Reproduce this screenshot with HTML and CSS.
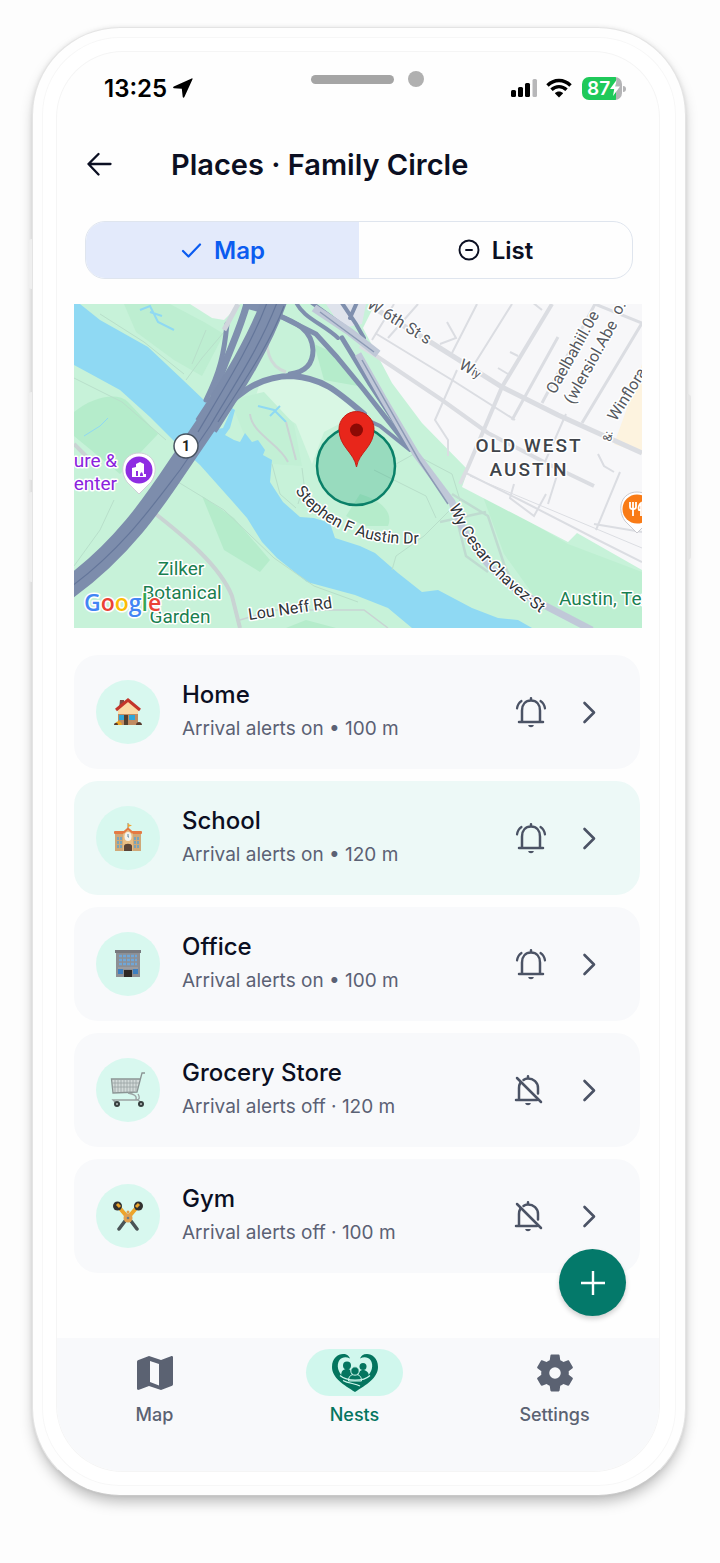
FILE: index.html
```html
<!DOCTYPE html>
<html lang="en">
<head>
    <meta charset="UTF-8">
    <meta name="viewport" content="width=device-width, initial-scale=1">
    <title>Places · Family Circle</title>
    <link rel="stylesheet" href="styles.css">
</head>
<body>
    <!-- shared icons -->
    <svg class="defs" width="0" height="0" aria-hidden="true">
        <symbol id="bell" viewBox="0 0 36 36">
            <g fill="none" stroke="currentColor" stroke-width="2.500" stroke-linecap="round" stroke-linejoin="round">
                <path d="M6 28H30M9 28V16.500C9 10.500 12.500 6.500 18 6.500S27 10.500 27 16.500V28M18 4.200V6"/>
                <path d="M8.500 7C6 8.700 4.500 11 4 14.500M27.500 7C30 8.700 31.500 11 32 14.500" stroke-width="2.200"/>
            </g>
            <path fill="currentColor" d="M15.200 31H20.800C20.500 34 15.500 34 15.200 31Z"/>
        </symbol>
        <symbol id="bell-off" viewBox="0 0 36 36">
            <g fill="none" stroke="currentColor" stroke-width="2.500" stroke-linecap="round" stroke-linejoin="round">
                <path d="M3 28H24M6 28V16C6 14 6.500 12.200 7.500 10.500M10.500 8C11.700 7 13.200 6.500 15 6.500C20.500 6.500 25 10.500 25 16V21.500M15 4.200V6"/>
                <path d="M4 6L28 30"/>
            </g>
            <path fill="currentColor" d="M12.200 31H17.800C17.500 34 12.500 34 12.200 31Z"/>
        </symbol>
        <symbol id="chevron" viewBox="0 0 24 24">
            <path d="M7.500 3L17 12.500L7.500 22" fill="none" stroke="currentColor" stroke-width="2.600" stroke-linecap="round" stroke-linejoin="round"/>
        </symbol>
    </svg>

    <div class="phone">
        <span class="key key_mute"></span>
        <span class="key key_up"></span>
        <span class="key key_down"></span>
        <span class="key key_power"></span>

        <div class="screen">
            <div class="status">
                <div class="clock">
                    <span>13:25</span>
                    <svg width="20" height="20" viewBox="0 0 20 20"><path d="M19.500 1.200C19.800.5 19.300.1 18.700.4L.8 8.500C-.2 9-.1 10.100 1 10.200L8.800 10.700L9.700 18.800C9.900 20 10.900 20 11.400 19Z"/></svg>
                </div>
                <div class="sensor">
                    <span class="speaker"></span>
                    <span class="camera"></span>
                </div>
                <div class="signals">
                    <svg width="27" height="20" viewBox="0 0 27 20">
                        <rect x="0" y="12" width="5" height="7" rx="1.500"/>
                        <rect x="7" y="9" width="5" height="10" rx="1.500"/>
                        <rect x="14" y="5" width="5" height="14" rx="1.500"/>
                        <rect x="21.500" y="1" width="4.500" height="18" rx="1.500" fill="#b7b7b9"/>
                    </svg>
                    <svg width="26" height="20" viewBox="0 0 26 20">
                        <g fill="none" stroke="#000" stroke-width="3.400">
                            <path d="M1.500 7.500C8 .8 18 .8 24.500 7.500"/>
                            <path d="M5.500 11.800C9.800 7.600 16.200 7.600 20.500 11.800"/>
                        </g>
                        <path d="M13 19.500L8.800 15.300C11 13 15 13 17.200 15.300Z"/>
                    </svg>
                    <div class="battery"><span>87</span><svg width="10" height="16" viewBox="0 0 10 16"><path d="M6.500 0L0 9H4.200L3 16L10 6.500H5.500Z" fill="#fff"/></svg></div>
                </div>
            </div>

            <header class="top">
                <a class="back" href="#" aria-label="Back">
                    <svg width="26" height="26" viewBox="0 0 26 26"><path d="M23.500 12H1.500M11.500 2L1.500 12L11.500 22.500" fill="none" stroke="currentColor" stroke-width="2.300" stroke-linecap="round" stroke-linejoin="round"/></svg>
                </a>
                <h1>Places · Family Circle</h1>
            </header>

            <div class="switch">
                <button type="button" class="on" aria-pressed="true">
                    <svg width="22" height="22" viewBox="0 0 22 22"><path d="M3 12L8.500 17.500L20 5.500" fill="none" stroke="currentColor" stroke-width="2.200" stroke-linecap="round" stroke-linejoin="round"/></svg>
                    Map
                </button>
                <button type="button" aria-pressed="false">
                    <svg width="22" height="22" viewBox="0 0 22 22"><g fill="none" stroke="currentColor" stroke-width="1.900" stroke-linecap="round"><circle cx="11" cy="11" r="9.500"/><path d="M8 11H14"/></g></svg>
                    List
                </button>
            </div>

            <svg class="map" viewBox="0 0 568 324" role="img" aria-label="Map of Old West Austin">
                <defs>
                    <path id="l_sixth" d="M292 3L376 55"/>
                    <path id="l_stephen" d="M221 187C244 219 288 247 366 238"/>
                    <path id="l_chavez" d="M375 203C392 244 420 276 474 315"/>
                    <path id="l_neff" d="M175 316L280 301"/>
                </defs>
                <rect width="568" height="324" fill="#c7f2d9"/>

                <!-- parks -->
                <g fill="#b5eccb">
                    <path d="M0 108C20 92 44 88 54 98L84 130L46 170L0 132Z"/>
                    <path d="M128 192L160 214L196 256L186 268L150 246Z"/>
                    <path d="M96 0L130 18L150 30L128 72L100 56L62 28L50 0Z" fill="#bdeed1"/>
                    <path d="M240 40L262 50L284 82L250 76Z"/>
                    <path d="M286 190C306 196 320 208 314 222L290 222L272 212Z"/>
                    <path d="M408 190L494 240L568 268V324H520L460 292L430 250Z" fill="#bdefd1"/>
                    <path d="M212 324L232 316L262 324Z"/>
                </g>
                <path d="M186 78L224 72L262 88L284 110L250 128L238 160L222 120L182 92Z" fill="#d9f7e4"/>
                <path d="M156 96L190 88L220 120L228 162L198 160L170 130Z" fill="#c2f0d5"/>

                <!-- town blocks -->
                <path d="M301 0L289 24L318 79L348 119L394 166L388 183L494 238L503 229L568 266V0Z" fill="#f7f7f9"/>
                <path d="M116 0L138 14L150 16L166 0Z" fill="#f4f4f6"/>
                <path d="M252 0H292L288 20L268 24Z" fill="#dfe3ec"/>
                <path d="M568 60L556 96L540 140L568 150Z" fill="#fdf3df"/>

                <!-- river -->
                <path fill="#8fd9f3" d="M0 0H6L26 16L74 43L109 76L132 98L139 126L149 124L158 104L161 106L156 124L151 131L160 136L166 138L171 129L178 138L184 136L191 146L189 151L198 156L196 178L209 198L226 213L240 214L256 219L261 234L286 242L301 249L324 269L348 288L364 286L398 304L424 314L444 316L458 324H338L314 304L281 291L233 278L203 254L188 238L173 214L159 198L126 161L99 136L76 113L46 86L13 68L0 61Z"/>
                <g fill="none" stroke="#8fd9f3" stroke-width="2">
                    <path d="M66 6L76 2L84 18L100 26M76 8L88 12"/>
                    <path d="M184 102L200 106L212 118M196 112L206 102"/>
                    <path d="M10 132L26 122L34 114" stroke-width="1"/>
                </g>

                <!-- paths in the parks -->
                <g fill="none" stroke="#b8dfca" stroke-width="1">
                    <path d="M0 74L48 98L92 136M26 10L70 38L110 70"/>
                    <path d="M104 178L150 206L200 254L240 282L284 298"/>
                    <path d="M150 28L128 54L112 76M132 26L118 60"/>
                    <path d="M198 160L206 190L222 204M228 164L230 180L224 200"/>
                    <path d="M318 266L322 252L350 232L386 196L378 170L340 150L322 160"/>
                    <path d="M300 166L352 192L362 214"/>
                    <path d="M0 262L26 226L40 196"/>
                </g>
                <g fill="none" stroke="#c9d3d3" stroke-width="4">
                    <path d="M79 208C110 232 146 262 158 292L166 324"/>
                    <path d="M0 140L16 156" />
                    <path d="M166 316L200 306L290 306L314 324" stroke-width="1.500"/>
                    <path d="M176 110C178 130 206 140 214 158M212 118L222 156" stroke-width="2"/>
                    <path d="M378 190L414 212L430 260L440 282M384 220L392 252L414 268M366 218L412 208" stroke-width="2.500" stroke="#bfdbd0"/>
                </g>

                <!-- streets -->
                <g fill="none" stroke="#dbdde2">
                    <path d="M300 4L358 39L428 83L484 111L568 149" stroke-width="5"/>
                    <path d="M286 42L304 53L368 96L414 129L470 158L520 182" stroke-width="4"/>
                    <path d="M478 0L428 83L394 163L386 180" stroke-width="4"/>
                    <path d="M301 29L378 76L441 116M344 0L314 34M320 0L298 36" stroke-width="2"/>
                    <path d="M403 0L378 49M438 0L401 59M373 18L382 34L366 40" stroke-width="2"/>
                    <path d="M521 0L468 99M568 19L508 119M484 33L438 116M521 0L568 19" stroke-width="3"/>
                    <path d="M383 66L361 116L374 136V152M492 110L470 160" stroke-width="2"/>
                    <path d="M436 48L444 52M424 64L434 70M458 -2L468 6M524 150L530 162L540 168" stroke-width="2"/>
                    <path d="M390 168L450 198L520 234L568 258M484 168L474 200M546 168L522 226M440 180L436 194L460 212L472 190M520 220L568 228" stroke-width="2"/>
                    <path d="M396 172L568 244" stroke-width="1"/>
                </g>

                <!-- highway and ramps -->
                <g fill="none" stroke="#7f8fae" stroke-linecap="round">
                    <path d="M174 -4C166 28 152 52 140 90" stroke-width="7"/>
                    <path d="M153 20C150 50 146 68 132 96" stroke-width="5"/>
                    <path d="M174 0L196 6" stroke-width="10"/>
                    <path d="M203 11C222 18 238 26 239 46C239 60 232 68 216 70" stroke-width="5"/>
                    <path d="M134 126C160 88 186 72 218 72C248 74 262 86 290 110" stroke-width="6"/>
                    <path d="M206 12L242 30L262 52L290 86L334 142" stroke-width="5"/>
                    <path d="M221 -4C228 14 250 20 264 34M234 -4L286 34L300 46" stroke-width="4"/>
                    <path d="M266 -4L282 20L290 34M284 -4L276 14" stroke-width="4"/>
                    <path d="M268 34L296 80L342 150" stroke-width="5"/>
                    <path d="M280 110L306 122L336 146" stroke-width="4"/>
                </g>
                <g fill="none" stroke="#c0c8d8">
                    <path d="M240 4L276 28L304 50" stroke-width="8"/>
                    <path d="M284 50L310 96L342 150L378 198C392 244 430 282 462 297L518 326" stroke-width="7"/>
                    <path d="M196 20C190 44 194 62 212 68" stroke-width="3" stroke="#cfdad8"/>
                    <path d="M150 26L164 0" stroke-width="5" stroke="#d0d5dc"/>
                </g>
                <g fill="none" stroke="#8c9ab5" stroke-width="1.500">
                    <path d="M288 56L346 158L374 200M246 8L300 48"/>
                </g>
                <path d="M202 -8C186 40 154 88 132 122" fill="none" stroke="#7d8dac" stroke-width="25"/>
                <path d="M138 112L104 162C80 198 48 246 -8 286" fill="none" stroke="#7d8dac" stroke-width="21"/>
                <g fill="none" stroke="#64769a" stroke-width="1.200">
                    <path d="M204 -4C186 44 158 84 136 122L106 166C80 200 48 246 -6 285"/>
                    <path d="M194 -4C178 40 150 84 124 128M210 2C194 44 168 80 144 118"/>
                </g>

                <!-- place circle and pin -->
                <circle cx="282" cy="162" r="39" fill="#0a9670" fill-opacity=".25" stroke="#0a8068" stroke-width="2.500"/>
                <path d="M282.500 163C280 148 265 143 265 125A17.500 17.500 0 0 1 300 125C300 143 285 148 282.500 163Z" fill="#e8261b" stroke="#c41f16" stroke-width="1"/>
                <circle cx="282.500" cy="126" r="6.500" fill="#8c0a05"/>

                <!-- road shield -->
                <circle cx="112" cy="142" r="12" fill="#fff" stroke="#47525f" stroke-width="1.500"/>
                <text x="112" y="147" text-anchor="middle" class="shield">1</text>

                <!-- museum pin -->
                <path d="M65 190L53 178C44 165 50 149 65 149S86 165 77 178Z" fill="#fff" stroke="#cfcfd6" stroke-width="1"/>
                <circle cx="65" cy="166" r="13.500" fill="#8e2de2"/>
                <path d="M58 172V164L62 163V160L66 158L70 160V170H72V173H58ZM62 172V167H64V172ZM66 172C66 167 69 167 69 172Z" fill="#fff" fill-rule="evenodd"/>

                <!-- restaurant pin -->
                <path d="M563 229L551 217C542 204 548 188 563 188S584 204 575 217Z" fill="#fff" stroke="#c9c9cf" stroke-width="1"/>
                <circle cx="563" cy="205" r="14.500" fill="#f97b16"/>
                <path d="M556 198V203C556 206 562 206 562 203V198M559 198V212M567 212V199C565 200 564 204 565 206H567" fill="none" stroke="#fff" stroke-width="1.800"/>

                <!-- labels -->
                <g class="street">
                    <text><textPath href="#l_sixth">W 6th St s</textPath></text>
                    <text transform="translate(384 64) rotate(28)">W<tspan class="tiny">iy</tspan></text>
                    <text transform="translate(481 91) rotate(-61)">Oaelbahiil.0e</text>
                    <text transform="translate(499 101) rotate(-61)">(wlersiol.Abe</text>
                    <text transform="translate(546 12) rotate(-61)">o:</text>
                    <text transform="translate(542 118) rotate(-58)">Winflora</text>
                    <text transform="translate(537 138) rotate(-80)" class="tiny">&amp;:</text>
                </g>
                <g class="road">
                    <text><textPath href="#l_stephen">Stephen F Austin Dr</textPath></text>
                    <text><textPath href="#l_chavez">Wy Cesar·Chavez·St</textPath></text>
                    <text><textPath href="#l_neff">Lou Neff Rd</textPath></text>
                </g>
                <g class="area" text-anchor="middle">
                    <text x="455" y="148">OLD WEST</text>
                    <text x="455" y="172">AUSTIN</text>
                </g>
                <g class="poi">
                    <text x="43" y="163" text-anchor="end" class="museum">ure &amp;</text>
                    <text x="43" y="186" text-anchor="end" class="museum">enter</text>
                    <text x="107" y="271" text-anchor="middle">Zilker</text>
                    <text x="108" y="295" text-anchor="middle">Botanical</text>
                    <text x="106" y="319" text-anchor="middle">Garden</text>
                    <text x="485" y="301">Austin, Texas</text>
                </g>
                <text x="10" y="307" class="google"><tspan fill="#4285f4">G</tspan><tspan fill="#ea4335">o</tspan><tspan fill="#fbbc05">o</tspan><tspan fill="#4285f4">g</tspan><tspan fill="#34a853">l</tspan><tspan fill="#ea4335">e</tspan></text>
            </svg>

            <ul class="places">
                <li>
                    <span class="pic">
                        <svg width="28" height="30" viewBox="0 0 28 30">
                            <path d="M6 3H10V9L5 12Z" fill="#7a4a44"/>
                            <path d="M4 12L14 4L24 12V28H4Z" fill="#fbd9a5"/>
                            <path d="M4 17H24V28H4Z" fill="#c08b62"/>
                            <path d="M2 13L14 3L26 13" fill="none" stroke="#c3352b" stroke-width="3"/>
                            <rect x="5" y="18" width="5" height="5" fill="#2fa6d8"/>
                            <rect x="15" y="18" width="6" height="5" fill="#2fa6d8"/>
                            <rect x="10" y="18" width="4" height="10" fill="#54402f"/>
                            <path d="M1 28C1 24 7 22 8 28Z" fill="#f0a823"/>
                            <path d="M0 28C0 25 4 25 4 28ZM22 28C22 24 28 24 28 28Z" fill="#573a2d"/>
                        </svg>
                    </span>
                    <div class="info">
                        <h2>Home</h2>
                        <p>Arrival alerts on • 100 m</p>
                    </div>
                    <button type="button" class="alert" aria-label="Turn Home alerts off"><svg><use href="#bell"/></svg></button>
                    <a class="more" href="#" aria-label="Open Home"><svg><use href="#chevron"/></svg></a>
                </li>
                <li class="current">
                    <span class="pic">
                        <svg width="28" height="30" viewBox="0 0 28 30">
                            <path d="M14 0V8" stroke="#a98252" stroke-width="1"/>
                            <path d="M14 1L18 2.500L14 4Z" fill="#f2a531"/>
                            <rect x="1" y="10" width="26" height="18" fill="#cfa878"/>
                            <rect x="0" y="8" width="28" height="3" rx="1" fill="#e57a43"/>
                            <path d="M9 10L14 5L19 10V28H9Z" fill="#e8bd83"/>
                            <path d="M9 10L14 5.500L19 10" fill="none" stroke="#e57a43" stroke-width="2"/>
                            <ellipse cx="14" cy="13.500" rx="3.500" ry="4.500" fill="#f4f4ee"/>
                            <path d="M14 11V14H15" stroke="#5b85a3" fill="none"/>
                            <path d="M10 28V23C10 20 18 20 18 23V28Z" fill="#5b4437"/>
                            <path d="M4 14V25M7 14V25M21 14V25M24 14V25" stroke="#7aa3b8" stroke-width="2" stroke-dasharray="3 1"/>
                        </svg>
                    </span>
                    <div class="info">
                        <h2>School</h2>
                        <p>Arrival alerts on • 120 m</p>
                    </div>
                    <button type="button" class="alert" aria-label="Turn School alerts off"><svg><use href="#bell"/></svg></button>
                    <a class="more" href="#" aria-label="Open School"><svg><use href="#chevron"/></svg></a>
                </li>
                <li>
                    <span class="pic">
                        <svg width="28" height="30" viewBox="0 0 28 30">
                            <rect x="2" y="3" width="24" height="25" fill="#8d8f94"/>
                            <rect x="1" y="1" width="26" height="3" fill="#77797e"/>
                            <path d="M5 7H23M5 11H23M5 15H23" stroke="#6fa6d8" stroke-width="2.500" stroke-dasharray="3 1"/>
                            <path d="M4 19H24" stroke="#a7a9ad" stroke-width="1"/>
                            <rect x="4" y="20" width="5" height="5" fill="#3d7fc0"/>
                            <rect x="19" y="20" width="5" height="5" fill="#3d7fc0"/>
                            <rect x="10" y="21" width="8" height="7" fill="#2e2825"/>
                        </svg>
                    </span>
                    <div class="info">
                        <h2>Office</h2>
                        <p>Arrival alerts on • 100 m</p>
                    </div>
                    <button type="button" class="alert" aria-label="Turn Office alerts off"><svg><use href="#bell"/></svg></button>
                    <a class="more" href="#" aria-label="Open Office"><svg><use href="#chevron"/></svg></a>
                </li>
                <li>
                    <span class="pic">
                        <svg width="36" height="36" viewBox="0 0 36 36">
                            <path d="M2 7H30L27 20L3 21Z" fill="#d3dad9"/>
                            <path d="M35 1H32L27 20L3 21L1.500 7H30.500" fill="none" stroke="#8b9494" stroke-width="1.300"/>
                            <path d="M5 8V20M8 8V20M11 8V20M14 8V20M17 8V20M20 8V20M23 8V20M26 8V19M2 11H29M2 15H28" stroke="#9aa3a3" stroke-width=".8"/>
                            <path d="M18 21C24 22 27 24 26 27L31 30M28 22C30 25 30 28 26 28H3L6 31" fill="none" stroke="#9aa3a3" stroke-width="1.300"/>
                            <circle cx="7" cy="32" r="3" fill="#37403f"/><circle cx="7" cy="32" r="1" fill="#b8bfbf"/>
                            <circle cx="31" cy="32" r="3" fill="#37403f"/><circle cx="31" cy="32" r="1" fill="#b8bfbf"/>
                        </svg>
                    </span>
                    <div class="info">
                        <h2>Grocery Store</h2>
                        <p>Arrival alerts off · 120 m</p>
                    </div>
                    <button type="button" class="alert" aria-label="Turn Grocery Store alerts on"><svg><use href="#bell-off"/></svg></button>
                    <a class="more" href="#" aria-label="Open Grocery Store"><svg><use href="#chevron"/></svg></a>
                </li>
                <li>
                    <span class="pic">
                        <svg width="30" height="30" viewBox="0 0 30 30">
                            <path d="M5 5L16 18M25 5L14 18" stroke="#eda52b" stroke-width="4"/>
                            <path d="M12 20L6 28M18 20L24 28" stroke="#4b5456" stroke-width="3.500" stroke-linecap="round"/>
                            <circle cx="15" cy="17" r="4.500" fill="#e2a04e"/>
                            <circle cx="15" cy="11" r="1.500" fill="#e2a04e"/>
                            <circle cx="15" cy="17" r="1.300" fill="#6a7b85"/>
                            <circle cx="4.500" cy="5" r="4.500" fill="#32312f"/>
                            <circle cx="25.500" cy="5" r="4.500" fill="#32312f"/>
                            <path d="M4 3L7 6M26 3L23 6" stroke="#eda52b" stroke-width="3"/>
                        </svg>
                    </span>
                    <div class="info">
                        <h2>Gym</h2>
                        <p>Arrival alerts off · 100 m</p>
                    </div>
                    <button type="button" class="alert" aria-label="Turn Gym alerts on"><svg><use href="#bell-off"/></svg></button>
                    <a class="more" href="#" aria-label="Open Gym"><svg><use href="#chevron"/></svg></a>
                </li>
            </ul>

            <nav class="tabs">
                <a href="#">
                    <span class="tab_icon">
                        <svg width="38" height="36" viewBox="0 0 38 36"><path fill="currentColor" fill-rule="evenodd" d="M1 7C1 6 1.500 5.300 2.500 5L13 1L25 5L35 1.200C36.300.8 37 1.400 37 2.500V29C37 30 36.500 30.700 35.500 31L25 35L13 31L3 34.800C1.700 35.200 1 34.600 1 33.500ZM14 6V27L23 30.500V9Z"/></svg>
                    </span>
                    Map
                </a>
                <a href="#" class="active">
                    <span class="tab_icon">
                        <svg width="46" height="38" viewBox="0 0 46 38">
                            <g fill="currentColor">
                                <path d="M23 38C12 31 0 24 0 13C0 4 6 0 11 0C15 0 17 2 18 4.500C14 2.500 10 3 7.500 6C4 11 6 19 12 23.500C18 27 28 27 34 23.500C40 19 42 11 38.500 6C36 3 32 2.500 28 4.500C29 2 31 0 35 0C40 0 46 4 46 13C46 24 34 31 23 38Z"/>
                                <circle cx="15" cy="11.500" r="4"/>
                                <path d="M9 23C9 17 11 15 15 15S20 17 20 24L14 26Z"/>
                                <circle cx="31" cy="12.500" r="3.500"/>
                                <path d="M26 24C26 18 28 16 31 16S37 18 37 23L32 26Z"/>
                            </g>
                            <g fill="currentColor" stroke="#d0f7ed" stroke-width="1">
                                <path d="M16.500 27C16.500 22 19 20.500 23 20.500S29.500 22 29.500 27Z"/>
                                <circle cx="23" cy="17" r="4.200"/>
                            </g>
                            <path d="M8 21.500C15 27.500 31 28 38 21.500M11 26.500C17 30 23 29 28 32" fill="none" stroke="#d0f7ed" stroke-width="1.200"/>
                        </svg>
                    </span>
                    Nests
                </a>
                <a href="#">
                    <span class="tab_icon">
                        <svg width="46" height="46" viewBox="0 0 24 24"><path fill="currentColor" d="M19.140 12.940c.04-.3.06-.61.06-.94 0-.32-.02-.64-.07-.94l2.030-1.580c.18-.14.23-.41.12-.61l-1.920-3.320c-.12-.22-.37-.29-.59-.22l-2.390.96c-.5-.38-1.030-.7-1.620-.94l-.36-2.540c-.04-.24-.24-.41-.48-.41h-3.840c-.24 0-.43.17-.47.41l-.36 2.540c-.59.24-1.130.57-1.620.94l-2.390-.96c-.22-.08-.47 0-.59.22L2.740 8.870c-.12.21-.08.47.12.61l2.030 1.580c-.05.3-.09.63-.09.94s.02.64.07.94l-2.030 1.580c-.18.14-.23.41-.12.61l1.920 3.320c.12.22.37.29.59.22l2.390-.96c.5.38 1.030.7 1.620.94l.36 2.540c.05.24.24.41.48.41h3.840c.24 0 .44-.17.47-.41l.36-2.540c.59-.24 1.130-.56 1.620-.94l2.390.96c.22.08.47 0 .59-.22l1.920-3.320c.12-.22.07-.47-.12-.61l-2.010-1.580zM12 15a3 3 0 1 1 0-6 3 3 0 0 1 0 6z"/></svg>
                    </span>
                    Settings
                </a>
            </nav>

            <button type="button" class="add" aria-label="Add place">
                <svg width="28" height="28" viewBox="0 0 28 28"><path d="M14 2V26M2 14H26" stroke="currentColor" stroke-width="2.400"/></svg>
            </button>
        </div>
    </div>
</body>
</html>
```

FILE: styles.css
```css
html{
    font-family: Inter, "Liberation Sans", sans-serif;
}
body,ul,li,h1,h2,p{margin: 0;padding: 0;}
body{
    background: #fdfdfd;
    color: #0b0f22;
}
svg{display: block;}
li{list-style: none;}
a{color: inherit;text-decoration: none;}
button{
    padding: 0;
    border: 0;
    background: none;
    font: inherit;
    color: inherit;
    cursor: pointer;
}
.defs{position: absolute;}

/* phone body */
.phone{
    position: relative;
    box-sizing: border-box;
    margin: 27px 34px 66px 32px;
    padding: 24px 26px 24px 24px;
    border: 1px solid #e4e4e4;
    border-bottom-color: #c9c9c9;
    border-radius: 88px;
    background: #fff;
    box-shadow: 0 8px 14px -2px rgba(0,0,0,.26), 0 0 4px rgba(0,0,0,.08), inset 0 0 0 9px #fefefe, inset 0 0 0 10px #f7f7f7;
}
.key{
    position: absolute;
    left: -5px;
    width: 4px;
    border-radius: 4px 0 0 4px;
    background: #efefef;
}
.key_mute{top: 211px;height: 50px;}
.key_up{top: 364px;height: 88px;}
.key_down{top: 464px;height: 90px;}
.key_power{
    left: auto;
    right: -6px;
    top: 366px;
    height: 166px;
    border-radius: 0 4px 4px 0;
    background: #e6e6e6;
}
.screen{
    position: relative;
    overflow: hidden;
    border-radius: 66px;
    background: #fefefe;
    box-shadow: 0 0 0 1px #f5f5f5;
}

/* status bar */
.status{
    display: grid;
    grid-template-columns: 1fr auto 1fr;
    align-items: center;
    height: 34px;
    padding: 19px 33px 0 47px;
    color: #000;
}
.clock,.signals,.sensor{
    display: flex;
    align-items: center;
}
.clock{
    gap: 6px;
    font-size: 24px;
    font-weight: 600;
}
.sensor{
    align-self: start;
    gap: 14px;
    padding-left: 4px;
}
.speaker{
    width: 83px;
    height: 9px;
    border-radius: 5px;
    background: #a5a5a5;
}
.camera{
    width: 16px;
    height: 16px;
    border-radius: 50%;
    background: #b0b0b0;
}
.signals{
    justify-content: flex-end;
    gap: 8px;
}
.battery{
    position: relative;
    display: flex;
    align-items: center;
    height: 23px;
    width: 40px;
    margin-right: 4px;
    margin-left: 2px;
    padding-left: 5px;
    box-sizing: border-box;
    border-radius: 7px;
    background: linear-gradient(to right, #1fc95a 34px, #b4b4b6 34px);
    color: #fff;
    font-size: 19px;
    font-weight: 600;
}
.battery:after{
    content: "";
    position: absolute;
    right: -4px;
    top: 9px;
    width: 3px;
    height: 6px;
    border-radius: 0 3px 3px 0;
    background: #b4b4b6;
}

/* header */
.top{
    display: flex;
    align-items: center;
    gap: 58px;
    margin-top: 30px;
    padding: 0 30px;
    height: 60px;
}
.top h1{
    font-size: 29px;
    font-weight: 600;
    line-height: 36px;
}

/* map / list switch */
.switch{
    display: flex;
    margin: 26px 26px 25px 28px;
    height: 56px;
    border: 1px solid #dfe5ee;
    border-radius: 20px;
    overflow: hidden;
}
.switch button{
    flex: 1;
    display: flex;
    align-items: center;
    justify-content: center;
    gap: 12px;
    font-size: 24px;
    font-weight: 600;
}
.switch .on{
    background: #e3eafb;
    color: #0b5cf0;
}

/* map */
.map{
    width: calc(100% - 34px);
    height: auto;
    margin: 0 17px;
}
.map text{
    font-family: Roboto, "Liberation Sans", sans-serif;
    paint-order: stroke;
    stroke: #fff;
    stroke-width: 3px;
    stroke-linejoin: round;
}
.map .shield{
    font-size: 14px;
    font-weight: 700;
    fill: #222;
}
.map .street text{
    font-size: 16px;
    fill: #55585e;
}
.map .street .tiny{font-size: 12px;}
.map .road text{
    font-size: 16px;
    fill: #2f3337;
}
.map .area text{
    font-size: 19px;
    font-weight: 500;
    letter-spacing: 2px;
    fill: #40444a;
}
.map .poi text{
    font-size: 19px;
    fill: #1a7f50;
}
.map .poi .museum{fill: #8a22dd;}
.map .google{
    font-family: "Open Sans", sans-serif;
    font-size: 23px;
    font-weight: 600;
}

/* places */
.places{
    display: flex;
    flex-direction: column;
    gap: 12px;
    padding: 27px 19px 65px 17px;
}
.places li{
    display: flex;
    align-items: center;
    box-sizing: border-box;
    height: 114px;
    padding: 0 39px 0 22px;
    border-radius: 24px;
    background: #f8f9fb;
}
.places .current{background: #edf9f7;}
.pic{
    display: flex;
    align-items: center;
    justify-content: center;
    width: 64px;
    height: 64px;
    margin-right: 22px;
    border-radius: 50%;
    background: #d8f8ef;
}
.info{flex: 1;}
.info h2{
    font-size: 24px;
    font-weight: 500;
    line-height: 34px;
}
.info p{
    font-size: 19px;
    line-height: 34px;
    color: #5b6174;
}
.alert,.more{color: #4b5365;}
.alert{margin-right: 28px;}
.alert svg{width: 36px;height: 36px;}
.more svg{width: 24px;height: 24px;}

/* bottom tabs */
.tabs{
    display: flex;
    justify-content: space-between;
    height: 122px;
    padding: 11px 56px 0 49px;
    background: #f8f9fb;
}
.tabs a{
    display: flex;
    flex-direction: column;
    align-items: center;
    gap: 5px;
    font-size: 18px;
    font-weight: 500;
    line-height: 28px;
    color: #5b6272;
}
.tab_icon{
    display: flex;
    align-items: center;
    justify-content: center;
    width: 97px;
    height: 47px;
    border-radius: 24px;
}
.tabs .active{color: #04755f;}
.active .tab_icon{background: #d0f7ed;}

.add{
    position: absolute;
    right: 33px;
    bottom: 155px;
    display: flex;
    align-items: center;
    justify-content: center;
    width: 67px;
    height: 67px;
    border-radius: 50%;
    background: #04796a;
    color: #fff;
    box-shadow: 0 3px 5px rgba(0,0,0,.18);
}
```
